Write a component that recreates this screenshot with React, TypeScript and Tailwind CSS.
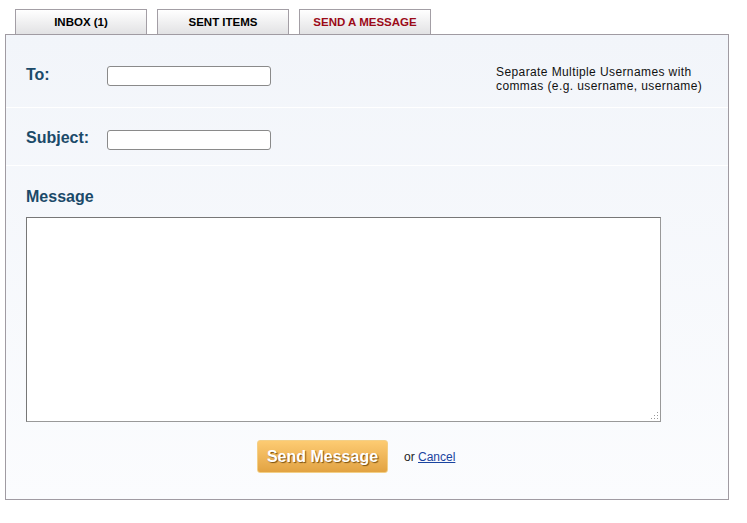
import React from "react";

export default function App() {
  const font = { fontFamily: '"Liberation Sans", Arial, sans-serif' };
  return (
    <div className="w-[747px] h-[523px] bg-white pt-[9px]" style={font}>
      <div className="flex gap-[10px] pl-[15px]">
        {["INBOX (1)", "SENT ITEMS", "SEND A MESSAGE"].map((t, i) => (
          <div
            key={t}
            className={`w-[132px] h-[25px] pt-[2px] border border-b-0 border-[#a39ea5] bg-gradient-to-b from-white to-[#e2e2e4] flex items-center justify-center text-[11.5px] font-bold ${
              i === 2 ? "text-[#9b0a18]" : "text-black"
            }`}
          >
            {t}
          </div>
        ))}
      </div>
      <div className="ml-[5px] w-[724px] h-[466px] border border-[#a09ba2] bg-gradient-to-b from-[#f2f5fa] to-[#fbfcfe] flex flex-col">
        <div className="h-[73px] flex items-start border-b border-white">
          <div className="w-[101px] shrink-0 pl-[20px] pt-[31px] text-[16px] font-bold text-[#1b4a69] leading-[18px]">To:</div>
          <div className="pt-[31px]">
            <div className="w-[164px] h-[20px] bg-white border border-[#8a8a8a] rounded-[3px]" />
          </div>
          <div className="ml-auto mr-[20px] pt-[30px] text-[12px] leading-[14px] tracking-[0.4px] text-[#111] w-[212px]">
            Separate Multiple Usernames with commas (e.g. username, username)
          </div>
        </div>
        <div className="h-[58px] flex items-start border-b border-white">
          <div className="w-[101px] shrink-0 pl-[20px] pt-[21px] text-[16px] font-bold text-[#1b4a69] leading-[18px]">Subject:</div>
          <div className="pt-[22px]">
            <div className="w-[164px] h-[20px] bg-white border border-[#8a8a8a] rounded-[3px]" />
          </div>
        </div>
        <div className="pl-[20px] pt-[22px] flex flex-col">
          <div className="text-[16px] font-bold text-[#1b4a69] leading-[18px]">Message</div>
          <div className="mt-[11px] relative w-[635px] h-[205px] bg-white border border-[#999] border-t-[#777] border-l-[#777]">
            <svg className="absolute right-[1px] bottom-[1px]" width="10" height="10" viewBox="0 0 10 10">
              {[
                [8, 2], [8, 5], [8, 8], [5, 5], [5, 8], [2, 8],
              ].map(([x, y], k) => (
                <rect key={k} x={x} y={y} width="1" height="1" fill="#999" />
              ))}
            </svg>
          </div>
          <div className="mt-[18px] flex items-center pl-[231px]">
            <div className="w-[131px] h-[33px] rounded-[3px] border border-[#f3cf86] bg-gradient-to-b from-[#fdcb72] to-[#e2a342] flex items-center justify-center text-white font-bold text-[16px] [text-shadow:1px_1px_1px_#7a5010]">
              Send Message
            </div>
            <div className="ml-[16px] text-[12px] text-[#222]">
              or <span className="text-[#1a44a0] underline">Cancel</span>
            </div>
          </div>
        </div>
      </div>
    </div>
  );
}
